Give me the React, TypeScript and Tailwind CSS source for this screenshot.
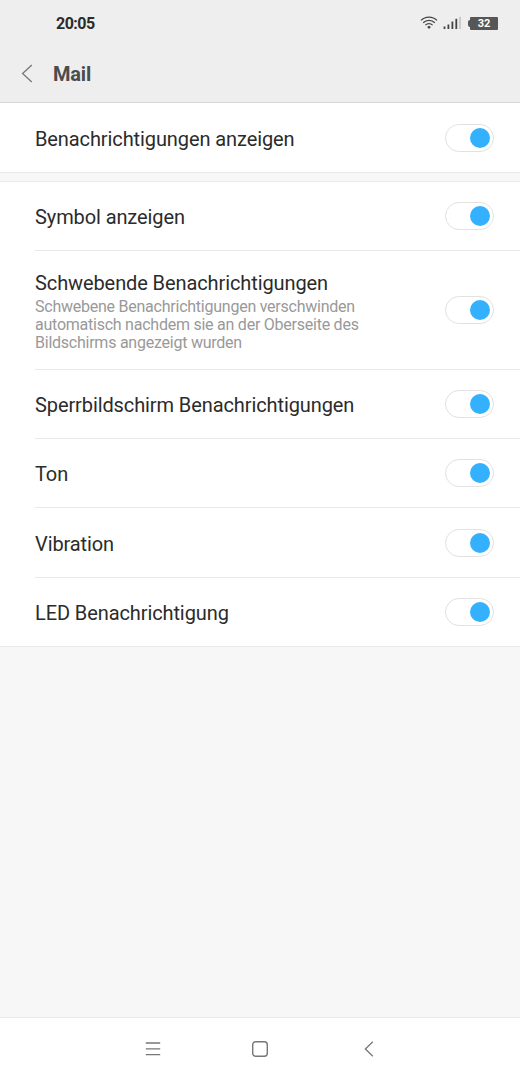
import { useState } from "react";
import clsx from "clsx";

const settings = [
  { id: "symbol", title: "Symbol anzeigen", height: "h-[69px]" },
  {
    id: "floating",
    title: "Schwebende Benachrichtigungen",
    lines: [
      "Schwebene Benachrichtigungen verschwinden",
      "automatisch nachdem sie an der Oberseite des",
      "Bildschirms angezeigt wurden",
    ],
    height: "h-[119px]",
  },
  {
    id: "lockscreen",
    title: "Sperrbildschirm Benachrichtigungen",
    height: "h-[69px]",
  },
  { id: "sound", title: "Ton", height: "h-[69px]" },
  { id: "vibration", title: "Vibration", height: "h-[70px]" },
  { id: "led", title: "LED Benachrichtigung", height: "h-[69px]" },
];

function Toggle({ label }: { label: string }) {
  const [on, setOn] = useState(true);
  return (
    <button
      role="switch"
      aria-checked={on}
      aria-label={label}
      onClick={() => setOn(!on)}
      className={clsx(
        "flex h-7 w-[49px] shrink-0 items-center rounded-full border border-[#e2e2e2] bg-white px-[3px]",
        on ? "justify-end" : "justify-start"
      )}
    >
      <span
        className={clsx(
          "size-5 rounded-full",
          on ? "bg-[#33b1ff]" : "bg-[#d0d0d0]"
        )}
      />
    </button>
  );
}

function Row({ title, lines, height, last }: any) {
  return (
    <div
      className={clsx(
        "flex items-center justify-between border-b border-[#e9e9e9] pr-[26px]",
        height,
        last ? "pl-[35px]" : "ml-[35px]"
      )}
    >
      <div className={lines ? "pt-[3px]" : "pt-0.5"}>
        <h2 className="text-[20px] leading-6 tracking-[-0.1px] whitespace-nowrap text-[#2b2b2b]">
          {title}
        </h2>
        {lines && (
          <p className="mt-[2.5px] text-[16px] leading-[18px] tracking-[-0.24px] whitespace-nowrap text-[#999]">
            {lines.map((line: string) => (
              <span key={line} className="block">
                {line}
              </span>
            ))}
          </p>
        )}
      </div>
      <Toggle label={title} />
    </div>
  );
}

function StatusBar() {
  return (
    <div className="flex h-[46px] items-center justify-between pr-[22px] pl-14">
      <span className="pt-0.5 text-[16px] font-bold tracking-[-0.5px] text-[#2b2b2b]">
        20:05
      </span>
      <div className="flex items-center">
        <svg width="18" height="14" viewBox="0 0 18 14" fill="none" stroke="#444" strokeWidth="1.3">
          <path d="M1 4.4a11.3 11.3 0 0 1 16 0" />
          <path d="M3.2 6.8a8.2 8.2 0 0 1 11.6 0" />
          <path d="M5.4 9.1a5.1 5.1 0 0 1 7.2 0" />
          <path d="M7.1 11a2.7 2.7 0 0 1 3.8 0L9 13z" fill="#444" stroke="none" />
        </svg>
        <svg className="ml-[5px]" width="18" height="14" viewBox="0 0 18 14" fill="#444">
          <rect x="0.6" y="10.5" width="1.8" height="2.5" />
          <rect x="4.5" y="8.5" width="1.8" height="4.5" />
          <rect x="8.5" y="5.5" width="1.8" height="7.5" />
          <rect x="12.4" y="2.8" width="1.8" height="10.2" />
          <rect x="16.2" y="0.8" width="1.6" height="12.2" fill="#c4c4c4" />
        </svg>
        <div className="ml-[7px] flex items-center">
          <span className="h-[7px] w-0.5 rounded-l-xs bg-[#565656]" />
          <span className="flex h-[13px] w-7 items-center justify-center rounded-[1px] bg-[#565656] text-[11px] leading-none font-bold text-white">
            32
          </span>
        </div>
      </div>
    </div>
  );
}

export default function App() {
  return (
    <main className="flex h-[1080px] w-[520px] flex-col bg-[#f7f7f7] font-['Roboto',sans-serif]">
      <header className="h-[103px] border-b border-[#d8d8d8] bg-[#eee]">
        <StatusBar />
        <div className="flex h-[55px] items-center pl-[21px]">
          <svg width="12" height="19" viewBox="0 0 12 19" fill="none" stroke="#777" strokeWidth="1.3">
            <path d="M10.8 1L1.6 9.5l9.2 8.5" />
          </svg>
          <h1 className="ml-5 text-[20px] font-bold tracking-[-0.2px] text-[#4c4c4c]">
            Mail
          </h1>
        </div>
      </header>

      <section className="bg-white">
        <Row title="Benachrichtigungen anzeigen" height="h-[70px]" last />
      </section>

      <section className="mt-2 border-t border-[#e9e9e9] bg-white">
        {settings.map((item, i) => (
          <Row key={item.id} {...item} last={i === settings.length - 1} />
        ))}
      </section>

      <nav className="mt-auto flex h-[63px] items-center border-t border-[#e9e9e9] bg-white pl-[145px]">
        <svg width="16" height="16" viewBox="0 0 16 16" stroke="#777" strokeWidth="1.3">
          <path d="M.8 2h14.4M.8 7.8h14.4M.8 13.6h14.4" />
        </svg>
        <svg className="ml-[91px]" width="16" height="16" viewBox="0 0 16 16" fill="none" stroke="#777" strokeWidth="1.4">
          <rect x="0.7" y="0.7" width="14.6" height="14.6" rx="3" />
        </svg>
        <svg className="ml-24" width="10" height="16" viewBox="0 0 10 16" fill="none" stroke="#777" strokeWidth="1.3">
          <path d="M8.8.8L1.4 8l7.4 7.2" />
        </svg>
      </nav>
    </main>
  );
}
